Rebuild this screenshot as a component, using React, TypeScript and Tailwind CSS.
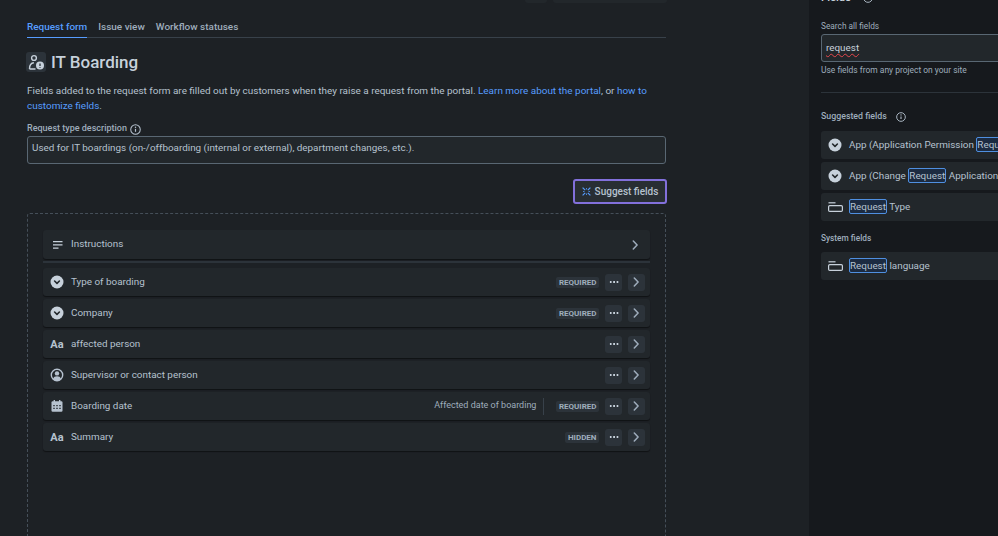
import { ReactNode } from "react";

const ChevronCircle = () => (
  <svg width="14" height="14" viewBox="0 0 14 14" className="shrink-0">
    <circle cx="7" cy="7" r="6.5" fill="#c7d1db" />
    <path d="M4.6 6l2.4 2.3L9.4 6" fill="none" stroke="#22272b" strokeWidth="1.6" strokeLinecap="round" strokeLinejoin="round" />
  </svg>
);

const TextIcon = () => (
  <span className="flex h-[14px] w-[14px] shrink-0 items-center justify-center text-[11px] leading-none font-bold text-[#b6c2cf]">Aa</span>
);

const PersonIcon = () => (
  <svg width="14" height="14" viewBox="0 0 14 14" className="shrink-0">
    <circle cx="7" cy="7" r="5.7" fill="none" stroke="#b6c2cf" strokeWidth="1.4" />
    <circle cx="7" cy="5.4" r="2.2" fill="#b6c2cf" />
    <path d="M3 11c.6-2 2-2.7 4-2.7s3.4.7 4 2.7c-1 1-2.5 1.5-4 1.5S4 12 3 11z" fill="#b6c2cf" />
  </svg>
);

const CalendarIcon = () => (
  <svg width="14" height="14" viewBox="0 0 14 14" className="shrink-0">
    <rect x="1.5" y="2.2" width="11" height="10.6" rx="1.2" fill="#b6c2cf" />
    <rect x="3.6" y="1" width="1.4" height="2.4" fill="#b6c2cf" />
    <rect x="9" y="1" width="1.4" height="2.4" fill="#b6c2cf" />
    <path d="M3.3 6h1.4v1.3H3.3zM6.3 6h1.4v1.3H6.3zM9.3 6h1.4v1.3H9.3zM3.3 8.8h1.4v1.3H3.3zM6.3 8.8h1.4v1.3H6.3zM9.3 8.8h1.4v1.3H9.3z" fill="#22272b" />
  </svg>
);

const LinesIcon = () => (
  <svg width="10" height="8" viewBox="0 0 10 8" className="shrink-0">
    <path d="M0 .7h9.5M0 3.9h9.5M0 7.1h5.5" stroke="#c7d1db" strokeWidth="1.3" />
  </svg>
);

const PanelIcon = () => (
  <svg width="15" height="10" viewBox="0 0 15 10" className="shrink-0">
    <path d="M.5 .8h7" stroke="#c7d1db" strokeWidth="1.2" />
    <rect x=".6" y="3.6" width="13.8" height="5.8" rx="1.2" fill="none" stroke="#c7d1db" strokeWidth="1.2" />
  </svg>
);

const InfoIcon = ({ size = 11 }: { size?: number }) => (
  <svg width={size} height={size} viewBox="0 0 12 12" className="shrink-0">
    <circle cx="6" cy="6" r="5.2" fill="none" stroke="#b6c2cf" strokeWidth="1.1" />
    <path d="M6 5.3v3.2" stroke="#b6c2cf" strokeWidth="1.3" />
    <circle cx="6" cy="3.5" r=".8" fill="#b6c2cf" />
  </svg>
);

const Chevron = () => (
  <svg width="7" height="10" viewBox="0 0 7 10">
    <path d="M1.3 1l3.8 4-3.8 4" fill="none" stroke="#9fadbc" strokeWidth="1.5" strokeLinecap="round" strokeLinejoin="round" />
  </svg>
);

const Sparkle = () => (
  <svg width="9" height="9" viewBox="0 0 9 9" className="shrink-0">
    <path d="M.6.6l2.6 2.6M8.4.6L5.8 3.2M.6 8.4l2.6-2.6M8.4 8.4L5.8 5.8" stroke="#579dff" strokeWidth="1.2" />
    <path d="M4.5 1.2v1.2M4.5 6.6v1.2M1.2 4.5h1.2M6.6 4.5h1.2" stroke="#579dff" strokeWidth="1" />
  </svg>
);

const UserAlertIcon = () => (
  <span className="flex h-5 w-5 shrink-0 items-center justify-center rounded-[3px] bg-[#2c333a]">
    <svg width="17" height="17" viewBox="0 0 17 17">
      <circle cx="6" cy="4" r="2.4" fill="none" stroke="#c7d1db" strokeWidth="1.4" />
      <path d="M1.5 15c0-3.6 1.6-6 4.4-6.2M1.5 15h6" fill="none" stroke="#c7d1db" strokeWidth="1.4" />
      <circle cx="12" cy="11.5" r="4" fill="#c7d1db" />
      <path d="M12 9.6v2.4M12 13v.8" stroke="#2c333a" strokeWidth="1.3" />
    </svg>
  </span>
);

const Lozenge = ({ children }: { children: ReactNode }) => (
  <span className="rounded-[2px] bg-[#2c333a] px-[2.5px] text-[8px] leading-[11px] font-bold text-[#9fadbc]">{children}</span>
);

const SquareButton = ({ children }: { children: ReactNode }) => (
  <span className="flex h-[17px] w-[17px] items-center justify-center rounded-[3px] bg-[#2c333a]">{children}</span>
);

const Dots = () => <span className="h-[2px] w-[10px] bg-[radial-gradient(circle,#c7d1db_1px,transparent_1px)] bg-[length:3.4px_2px]" />;

const FieldRow = ({ icon, name, lozenge, note }: { icon: ReactNode; name: string; lozenge?: string; note?: string }) => (
  <div className="flex h-[28px] items-center rounded-[3px] bg-[#22272b] pr-[5px] pl-[7px] shadow-[0_1px_1px_#101214]">
    {icon}
    <span className="ml-[7px] text-[9.9px] text-[#b6c2cf]">{name}</span>
    <div className="ml-auto flex items-center">
      {note && (
        <>
          <span className="text-[9px] text-[#9fadbc]">{note}</span>
          <span className="mr-[12px] ml-[7px] h-[17px] w-px bg-[#38414a]" />
        </>
      )}
      {lozenge && <Lozenge>{lozenge}</Lozenge>}
      <div className="ml-[6px] flex gap-[6px]">
        <SquareButton><Dots /></SquareButton>
        <SquareButton><Chevron /></SquareButton>
      </div>
    </div>
  </div>
);

const Hit = ({ children }: { children: ReactNode }) => (
  <span className="rounded-[2px] border border-[#4f8fe0] bg-[#1c2b41] py-px">{children}</span>
);

const SideRow = ({ icon, children }: { icon: ReactNode; children: ReactNode }) => (
  <div className="flex h-[28px] w-[220px] items-center gap-[7px] rounded-[3px] bg-[#22272b] pl-[7px] text-[9.9px] whitespace-nowrap text-[#b6c2cf]">
    {icon}
    <span>{children}</span>
  </div>
);

export default function App() {
  return (
    <div className="flex h-[536px] w-[998px] overflow-hidden bg-[#1d2125] font-['Roboto',sans-serif]">
      <main className="w-[809px] shrink-0 pl-[27px]">
        <div className="flex h-[3px] w-[644px] justify-end gap-[6px] pr-[4px]">
          <span className="h-[3px] w-[22px] rounded-b-[3px] bg-[#22272b]" />
          <span className="h-[3px] w-[114px] rounded-b-[3px] bg-[#22272b]" />
        </div>

        <div className="w-[639px]">
          <div className="mt-[17px] flex h-[18px] gap-[11px] border-b border-[#38414a] text-[9.95px] leading-[14px] font-medium text-[#9fadbc]">
            <span className="-mb-px border-b-[1.5px] border-[#579dff] text-[#579dff]">Request form</span>
            <span>Issue view</span>
            <span>Workflow statuses</span>
          </div>

          <div className="mt-[14px] -ml-px flex h-[20px] items-center gap-[5px]">
            <UserAlertIcon />
            <h1 className="text-[17px] leading-none font-medium text-[#c7d1db]">IT Boarding</h1>
          </div>

          <p className="mt-[11px] w-[625px] text-[9.95px] leading-[15px] text-[#b6c2cf]">
            Fields added to the request form are filled out by customers when they raise a request from the portal.{" "}
            <span className="text-[#579dff]">Learn more about the portal</span>, or{" "}
            <span className="text-[#579dff]">how to customize fields</span>.
          </p>

          <div className="mt-[9px] flex h-[14px] items-center gap-[3px] text-[9px] font-medium text-[#9fadbc]">
            Request type description <InfoIcon />
          </div>

          <div className="flex h-[28px] items-center rounded-[3px] border border-[#596773] bg-[#22272b] px-[4px] pb-[3px] text-[9.9px] text-[#b6c2cf]">
            Used for IT boardings (on-/offboarding (internal or external), department changes, etc.).
          </div>
        </div>

        <div className="mt-[15px] flex w-[640px] justify-end">
          <button className="flex h-[25px] w-[94px] items-center justify-center gap-[4px] rounded-[3px] border-2 border-[#8270db] bg-[#282e33] text-[10px] font-medium text-[#b6c2cf]">
            <Sparkle /> Suggest fields
          </button>
        </div>

        <div className="mt-[9px] h-[340px] w-[639px] rounded-[3px] border border-dashed border-[#454f59] px-[15px] pt-[16px]">
          <div className="flex h-[29px] items-center rounded-[3px] bg-[#22272b] pr-[11px] pl-[10px] shadow-[0_1px_1px_#101214]">
            <LinesIcon />
            <span className="ml-[8px] text-[9.9px] text-[#b6c2cf]">Instructions</span>
            <span className="ml-auto flex"><Chevron /></span>
          </div>
          <div className="mt-[2px] h-[2px] bg-[#2c333a]" />
          <div className="mt-[5px] flex flex-col gap-[3px]">
            <FieldRow icon={<ChevronCircle />} name="Type of boarding" lozenge="REQUIRED" />
            <FieldRow icon={<ChevronCircle />} name="Company" lozenge="REQUIRED" />
            <FieldRow icon={<TextIcon />} name="affected person" />
            <FieldRow icon={<PersonIcon />} name="Supervisor or contact person" />
            <FieldRow icon={<CalendarIcon />} name="Boarding date" note="Affected date of boarding" lozenge="REQUIRED" />
            <FieldRow icon={<TextIcon />} name="Summary" lozenge="HIDDEN" />
          </div>
        </div>
      </main>

      <aside className="min-w-0 flex-1 overflow-hidden bg-[#16191d] pl-[12px]">
        <div className="-mt-[9px] flex h-[14px] items-center gap-[12px] text-[11.2px] font-medium text-[#c7d1db]">
          Fields <InfoIcon size={10} />
        </div>
        <div className="mt-[15px] text-[8.3px] leading-[13px] text-[#9fadbc]">Search all fields</div>
        <div className="mt-[1px] flex h-[28px] w-[220px] items-center rounded-[3px] border border-[#596773] bg-[#22272b] px-[4px] text-[9.9px] text-[#c7d1db]">
          <span className="underline decoration-[#e5484d] decoration-wavy decoration-1 underline-offset-2">request</span>
        </div>
        <div className="mt-[2px] text-[8.45px] leading-[13px] text-[#9fadbc]">Use fields from any project on your site</div>
        <div className="mt-[15px] h-px w-[220px] bg-[#2c333a]" />
        <div className="mt-[17px] flex h-[14px] items-center gap-[9px] text-[8.8px] font-medium text-[#9fadbc]">
          Suggested fields <InfoIcon size={10} />
        </div>
        <div className="mt-[7px] flex flex-col gap-[3px]">
          <SideRow icon={<ChevronCircle />}>App (Application Permission <Hit>Request</Hit></SideRow>
          <SideRow icon={<ChevronCircle />}>App (Change <Hit>Request</Hit> Application</SideRow>
          <SideRow icon={<PanelIcon />}><span className="-ml-px"><Hit>Request</Hit></span> Type</SideRow>
        </div>
        <div className="mt-[10px] h-[14px] text-[8.3px] leading-[14px] font-medium text-[#9fadbc]">System fields</div>
        <div className="mt-[7px]">
          <SideRow icon={<PanelIcon />}><span className="-ml-px"><Hit>Request</Hit></span> language</SideRow>
        </div>
      </aside>
    </div>
  );
}
